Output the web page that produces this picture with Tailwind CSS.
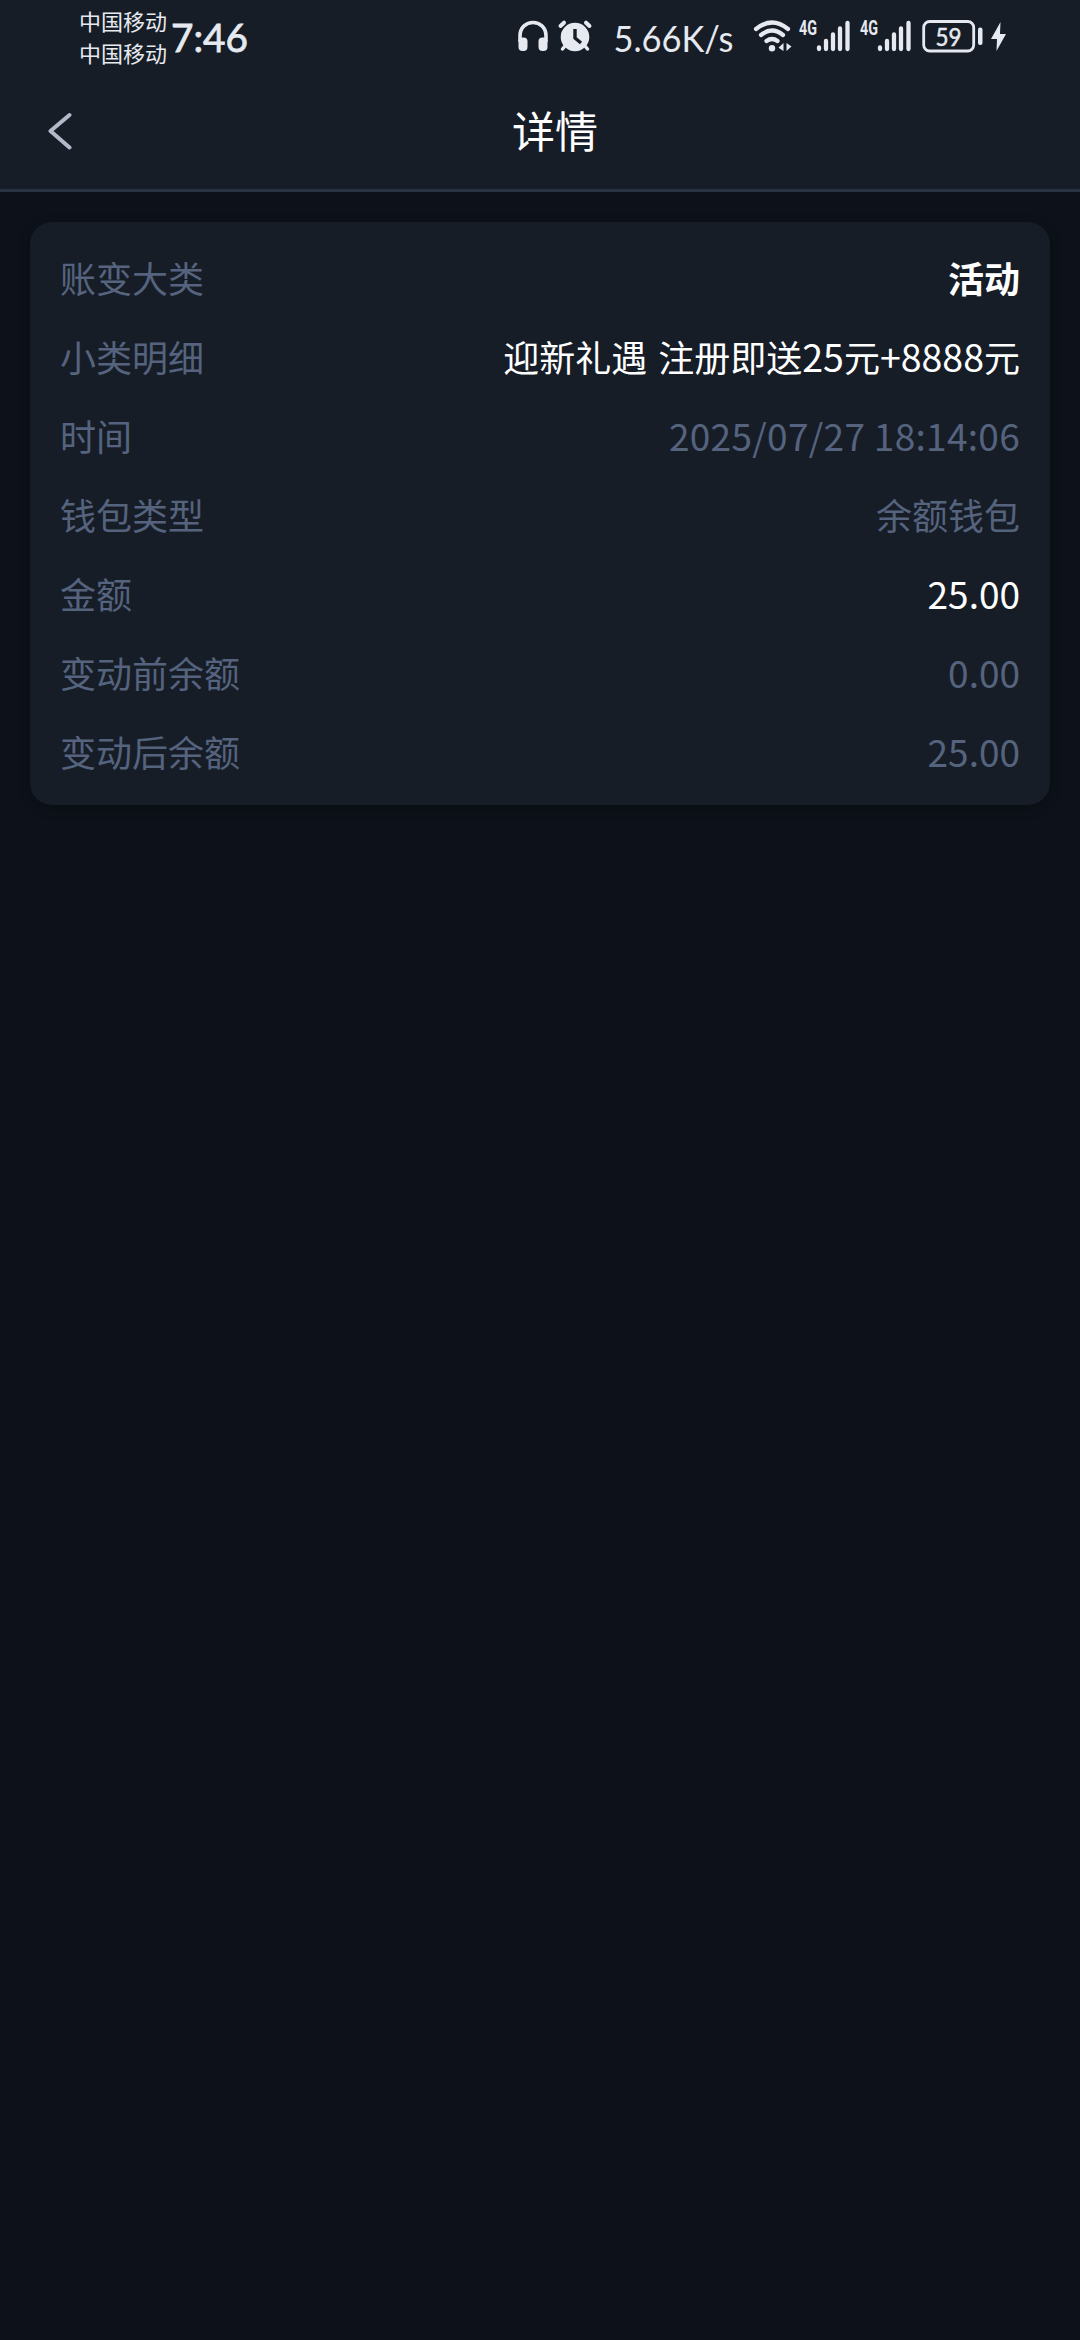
<!DOCTYPE html>
<html lang="zh-CN">
<head>
<meta charset="utf-8">
<title>详情</title>
<script src="https://cdn.jsdelivr.net/npm/@tailwindcss/browser@4"></script>
</head>
<body class="min-h-[2340px] w-[1080px] overflow-x-hidden bg-[#0d121a] font-['Noto_Sans_CJK_SC',sans-serif] text-[36px]">
<header class="h-[192px] border-b-[3px] border-[#293344] bg-[#161d27]">
  <div class="flex h-[76px] items-start font-['Lato',sans-serif] text-[#e6e9ef]">
    <div class="ml-[79px] mt-[4px] w-[88px] whitespace-nowrap font-['Noto_Sans_CJK_SC',sans-serif] text-[22px] leading-[32px]">
      <div>中国移动</div>
      <div>中国移动</div>
    </div>
    <svg class="h-[76px] w-[90px]" viewBox="167 0 90 76" fill="currentColor"><text x="171" y="52" font-size="39" textLength="77" lengthAdjust="spacingAndGlyphs" stroke="currentColor" stroke-width=".8">7:46</text></svg>
    <svg class="ml-[253px] h-[76px] w-[98px]" viewBox="510 0 98 76" fill="none" stroke="currentColor">
      <path d="M520 42V36C520 18 546 18 546 36V42" stroke-width="3.6"/>
      <rect x="518.5" y="37.5" width="9" height="13.5" rx="4" fill="currentColor" stroke="none"/>
      <rect x="538.5" y="37.5" width="9" height="13.5" rx="4" fill="currentColor" stroke="none"/>
      <circle cx="575" cy="37" r="14.3" fill="currentColor" stroke="none"/>
      <path d="M560.5 26L564 22.700M589.500 26L586 22.700" stroke-width="4" stroke-linecap="round"/>
      <path d="M565 46L562.500 49M585 46L587.500 49" stroke-width="3.500" stroke-linecap="round"/>
      <path d="M575 29V38L581 43" stroke="#161d27" stroke-width="3.400"/>
    </svg>
    <svg class="h-[76px] w-[140px]" viewBox="608 0 140 76" fill="currentColor"><text x="613.500" y="51.500" font-size="37" textLength="120" lengthAdjust="spacingAndGlyphs">5.66K/s</text></svg>
    <svg class="h-[76px] w-[50px]" viewBox="748 0 50 76" fill="none" stroke="currentColor" stroke-width="4.200" stroke-linecap="round">
      <path d="M756 29Q772 16 788 29M761 35Q772 26 783 35M766.500 41Q772 37 777.500 41"/>
      <circle cx="772" cy="48.300" r="3.200" fill="currentColor" stroke="none"/>
      <path d="M783.500 43V51L778.500 47.800ZM786.500 43V51L791.500 46.500Z" fill="currentColor" stroke="none"/>
    </svg>
    <svg class="h-[76px] w-[61px]" viewBox="798 0 61 76" fill="currentColor">
      <text x="799" y="35" font-family="Roboto" font-weight="700" font-size="20" textLength="18" lengthAdjust="spacingAndGlyphs">4G</text>
      <path d="M819 47.500V49M826 41V49M833 34.500V49M840 28.500V49M847.500 23V49" stroke="currentColor" stroke-width="4.300" stroke-linecap="round"/>
    </svg>
    <svg class="h-[76px] w-[61px]" viewBox="798 0 61 76" fill="currentColor">
      <text x="799" y="35" font-family="Roboto" font-weight="700" font-size="20" textLength="18" lengthAdjust="spacingAndGlyphs">4G</text>
      <path d="M819 47.500V49M826 41V49M833 34.500V49M840 28.500V49M847.500 23V49" stroke="currentColor" stroke-width="4.300" stroke-linecap="round"/>
    </svg>
    <svg class="h-[76px] w-[90px]" viewBox="920 0 90 76" fill="currentColor">
      <rect x="923.700" y="21.500" width="50" height="29.500" rx="6" fill="none" stroke="currentColor" stroke-width="2.800"/>
      <text x="935.500" y="45.500" font-size="24.500" textLength="26" lengthAdjust="spacingAndGlyphs" stroke="currentColor" stroke-width=".5">59</text>
      <rect x="978" y="27.500" width="4.500" height="17.500" rx="2"/>
      <path d="M1000.500 22L991 39H997L996.500 51L1006 34H1000Z"/>
    </svg>
  </div>
  <div class="grid h-[108px] grid-cols-[1fr_auto_1fr] items-center">
    <svg class="ml-[45px] h-[40px] w-[32px]" viewBox="45 110 32 40" fill="none" stroke="#b2b9c9" stroke-width="4" stroke-linecap="round" stroke-linejoin="round"><path d="M69.500 115L50.500 131L69.500 147.500"/></svg>
    <h1 class="mb-[3px] ml-[30px] text-[43px] leading-[64px] text-white">详情</h1>
  </div>
</header>
<main class="px-[30px] pt-[30px]">
  <dl class="rounded-[22px] bg-[#161d27] px-[30px] pt-[15px] pb-[15px] leading-[54px] text-[#55637e] shadow-[0_3px_12px_rgba(0,0,0,0.3)] [&>div]:flex [&>div]:h-[79px] [&>div]:items-center [&>div]:justify-between">
    <div><dt>账变大类</dt><dd class="font-bold text-white">活动</dd></div>
    <div><dt>小类明细</dt><dd class="whitespace-nowrap text-white">迎新礼遇<span class="ml-[11px]">注册即送</span><span class="text-[37.5px]">25</span>元<span class="text-[37.5px]">+8888</span>元</dd></div>
    <div><dt>时间</dt><dd class="text-[37px] tracking-[0.3px]">2025/07/27 18:14:06</dd></div>
    <div><dt>钱包类型</dt><dd>余额钱包</dd></div>
    <div><dt>金额</dt><dd class="text-[37px] text-white">25.00</dd></div>
    <div><dt>变动前余额</dt><dd class="text-[37px]">0.00</dd></div>
    <div><dt>变动后余额</dt><dd class="text-[37px]">25.00</dd></div>
  </dl>
</main>
</body>
</html>
